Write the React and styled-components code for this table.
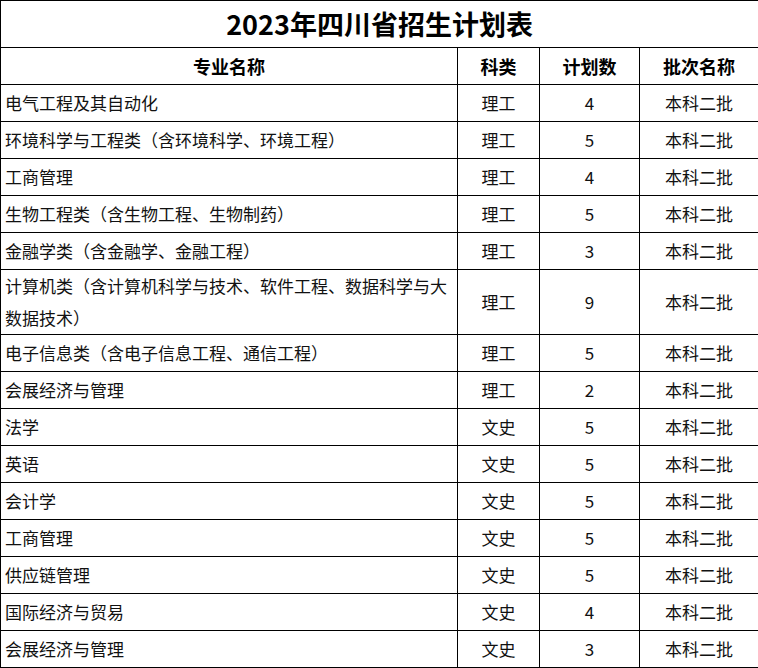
import React from "react";
import styled, { createGlobalStyle } from "styled-components";

const rows = [
  ["电气工程及其自动化", "理工", 4],
  ["环境科学与工程类（含环境科学、环境工程）", "理工", 5],
  ["工商管理", "理工", 4],
  ["生物工程类（含生物工程、生物制药）", "理工", 5],
  ["金融学类（含金融学、金融工程）", "理工", 3],
  ["计算机类（含计算机科学与技术、软件工程、数据科学与大数据技术）", "理工", 9],
  ["电子信息类（含电子信息工程、通信工程）", "理工", 5],
  ["会展经济与管理", "理工", 2],
  ["法学", "文史", 5],
  ["英语", "文史", 5],
  ["会计学", "文史", 5],
  ["工商管理", "文史", 5],
  ["供应链管理", "文史", 5],
  ["国际经济与贸易", "文史", 4],
  ["会展经济与管理", "文史", 3],
];

export default function App() {
  return (
    <>
      <GlobalStyle />
      <Table>
        <colgroup>
          <col style={{ width: 457 }} />
          <col style={{ width: 82 }} />
          <col style={{ width: 100 }} />
          <col style={{ width: 119 }} />
        </colgroup>
        <thead>
          <tr>
            <TitleCell colSpan={4}>2023年四川省招生计划表</TitleCell>
          </tr>
          <tr>
            <HeadCell>专业名称</HeadCell>
            <HeadCell>科类</HeadCell>
            <HeadCell>计划数</HeadCell>
            <HeadCell>批次名称</HeadCell>
          </tr>
        </thead>
        <tbody>
          {rows.map(([name, type, num], i) => (
            <tr key={i}>
              <Cell $align="left">{name}</Cell>
              <Cell>{type}</Cell>
              <Cell>{num}</Cell>
              <Cell>本科二批</Cell>
            </tr>
          ))}
        </tbody>
      </Table>
    </>
  );
}

const GlobalStyle = createGlobalStyle`
  body {
    margin: 0;
    background: #ffffff;
    font-family: "Noto Sans CJK SC", "Noto Sans", sans-serif;
  }
`;

const Table = styled.table`
  width: 758px;
  border-collapse: collapse;
  table-layout: fixed;
  color: #111;
  th,
  td {
    border: 1px solid #000;
  }
`;

const TitleCell = styled.th`
  height: 46px;
  padding: 0;
  font-size: 27px;
  font-weight: 700;
  line-height: 46px;
  text-align: center;
  color: #000;
`;

const HeadCell = styled.th`
  height: 36px;
  padding: 0 4px;
  font-size: 18px;
  font-weight: 700;
  line-height: 32px;
  text-align: center;
  color: #000;
`;

const Cell = styled.td`
  height: 36px;
  padding: 0 4px;
  font-size: 17px;
  font-weight: 400;
  line-height: 32px;
  text-align: ${(p) => p.$align || "center"};
  vertical-align: middle;
`;
